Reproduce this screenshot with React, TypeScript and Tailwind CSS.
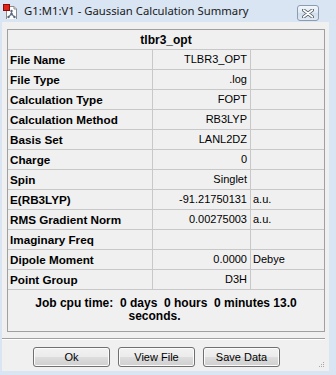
import React from "react";

const rows: [string, string, string][] = [
  ["File Name", "TLBR3_OPT", ""],
  ["File Type", ".log", ""],
  ["Calculation Type", "FOPT", ""],
  ["Calculation Method", "RB3LYP", ""],
  ["Basis Set", "LANL2DZ", ""],
  ["Charge", "0", ""],
  ["Spin", "Singlet", ""],
  ["E(RB3LYP)", "-91.21750131", "a.u."],
  ["RMS Gradient Norm", "0.00275003", "a.u."],
  ["Imaginary Freq", "", ""],
  ["Dipole Moment", "0.0000", "Debye"],
  ["Point Group", "D3H", ""],
];

function AppIcon() {
  return (
    <svg width="16" height="16" viewBox="0 0 16 16">
      <path d="M4.5 3.5 H12 L14.5 6 V16.5 H4.5 Z" fill="#ffffff" stroke="#8a8a8a" strokeWidth="1" />
      <path d="M12 3.5 V6 H14.5" fill="#e8e8e8" stroke="#8a8a8a" strokeWidth="1" />
      <rect x="1.5" y="1.5" width="6" height="6" fill="#e2231a" stroke="#8c0d08" strokeWidth="1" />
      <line x1="9.5" y1="8" x2="9.5" y2="11" stroke="#6f7f8f" strokeWidth="1.2" />
      <line x1="9.5" y1="11" x2="6.5" y2="14" stroke="#6f7f8f" strokeWidth="1.2" />
      <line x1="9.5" y1="11" x2="12.5" y2="14" stroke="#6f7f8f" strokeWidth="1.2" />
      <circle cx="9.5" cy="8" r="1.2" fill="#5b6b7b" />
      <circle cx="9.5" cy="11" r="1.3" fill="#5b6b7b" />
      <circle cx="6.5" cy="14" r="1.2" fill="#5b6b7b" />
      <circle cx="12.5" cy="14" r="1.2" fill="#5b6b7b" />
    </svg>
  );
}

function CloseGlyph() {
  return (
    <svg width="12" height="9" viewBox="0 0 12 9">
      <path d="M1.5 1 L10.5 8 M10.5 1 L1.5 8" stroke="#4f5966" strokeWidth="3.4" strokeLinecap="round" />
      <path d="M1.5 1 L10.5 8 M10.5 1 L1.5 8" stroke="#ffffff" strokeWidth="1.6" strokeLinecap="round" />
    </svg>
  );
}

function Btn({ label, ml }: { label: string; ml: string }) {
  return (
    <button
      className={`${ml} w-[77px] h-[20px] rounded-[3px] border border-[#707070] bg-[linear-gradient(#f2f2f2_0%,#ebebeb_50%,#dddddd_51%,#cfcfcf_100%)] text-[11px] text-black flex items-center justify-center shadow-[inset_0_0_0_1px_#fcfcfc]`}
      style={{ fontFamily: "'Liberation Sans', Arial, sans-serif" }}
    >
      {label}
    </button>
  );
}

export default function App() {
  return (
    <div
      className="w-[336px] h-[375px] bg-[#d9e5f3] flex flex-col overflow-hidden"
      style={{ fontFamily: "'Liberation Sans', Arial, sans-serif" }}
    >
      {/* Title bar */}
      <div className="h-[22px] flex items-start relative">
        <div className="ml-[2px] mt-[3px]">
          <AppIcon />
        </div>
        <div
          className="ml-[6px] mt-[3px] text-[11.3px] leading-[16px] text-[#1a1a1a]"
          style={{ fontFamily: "'Noto Sans', 'Open Sans', sans-serif" }}
        >
          G1:M1:V1 - Gaussian Calculation Summary
        </div>
        <div className="absolute left-[297px] top-[5px] w-[22px] h-[16px] rounded-[3px] border border-[#8a9bb2] bg-[linear-gradient(#f3f7fb,#dfe8f3_50%,#d2deec_51%,#dfe8f3)] flex items-center justify-center">
          <CloseGlyph />
        </div>
      </div>

      {/* Client area */}
      <div className="ml-[2px] mr-[7px] h-[349px] bg-[#f0f0f0] flex flex-col relative">
        {/* Table box */}
        <div className="ml-[5px] mt-[7px] w-[318px] h-[303px] border border-[#a0a0a0] flex flex-col">
          <div className="h-[20px] border-b border-[#c8c8c8] flex items-center justify-center text-[12px] font-bold text-black">
            tlbr3_opt
          </div>
          {rows.map(([label, value, unit]) => (
            <div key={label} className="h-[20px] border-b border-[#c8c8c8] flex">
              <div className="w-[145px] border-r border-[#c8c8c8] pl-[2px] flex items-center text-[11.7px] font-bold text-black whitespace-nowrap">
                {label}
              </div>
              <div className="w-[98px] border-r border-[#c8c8c8] pr-[3px] flex items-center justify-end text-[11px] text-black whitespace-nowrap">
                {value}
              </div>
              <div className="w-[73px] pl-[2px] flex items-center text-[11px] text-black whitespace-nowrap">
                {unit}
              </div>
            </div>
          ))}
          <div className="flex-1 flex flex-col items-center pt-[7px] text-[12px] leading-[13px] font-bold text-black">
            <div className="whitespace-pre">Job cpu time:  0 days  0 hours  0 minutes 13.0</div>
            <div className="pr-[23px]">seconds.</div>
          </div>
        </div>

        {/* Separator */}
        <div className="mt-[6px] mr-[4px] h-[1px] bg-[#a0a0a0]" />
        <div className="mr-[4px] h-[1px] bg-[#ffffff]" />

        {/* Buttons */}
        <div className="mt-[7px] flex">
          <Btn label="Ok" ml="ml-[31px]" />
          <Btn label="View File" ml="ml-[8px]" />
          <Btn label="Save Data" ml="ml-[8px]" />
        </div>

        {/* Resize grip */}
        <div className="absolute right-[4px] bottom-[3px] w-[7px] h-[7px]">
          <svg width="7" height="7" viewBox="0 0 7 7">
            <rect x="5" y="1" width="1" height="1" fill="#a8a8a8" />
            <rect x="3" y="3" width="1" height="1" fill="#a8a8a8" />
            <rect x="5" y="3" width="1" height="1" fill="#a8a8a8" />
            <rect x="1" y="5" width="1" height="1" fill="#a8a8a8" />
            <rect x="3" y="5" width="1" height="1" fill="#a8a8a8" />
            <rect x="5" y="5" width="1" height="1" fill="#a8a8a8" />
          </svg>
        </div>
      </div>
    </div>
  );
}
